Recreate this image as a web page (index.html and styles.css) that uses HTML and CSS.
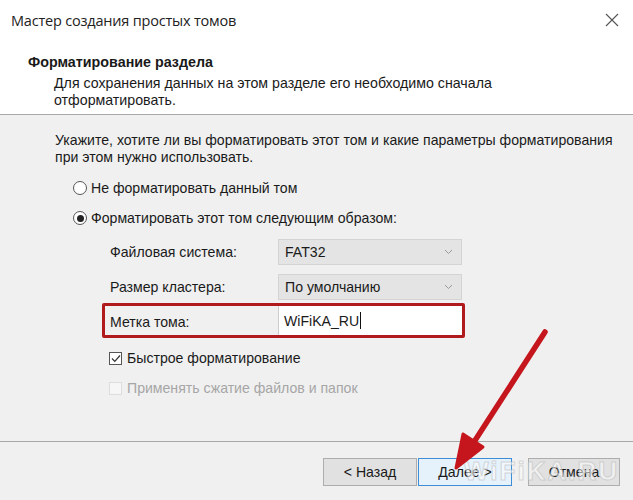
FILE: index.html
```html
<!DOCTYPE html>
<html lang="ru">
<head>
<meta charset="utf-8">
<link rel="stylesheet" href="styles.css">
</head>
<body>
<div class="dialog">
  <header class="head">
    <div class="titlebar">
      <span class="title">Мастер создания простых томов</span>
      <svg class="close" width="14" height="14" viewBox="0 0 14 14"><path d="M1 1L13 13M13 1L1 13" stroke="#555" stroke-width="1.1" fill="none"/></svg>
    </div>
    <div class="heading">Форматирование раздела</div>
    <div class="sub">Для сохранения данных на этом разделе его необходимо сначала<br>отформатировать.</div>
  </header>
  <main class="body">
    <p class="intro">Укажите, хотите ли вы форматировать этот том и какие параметры форматирования<br>при этом нужно использовать.</p>
    <div class="radio-row"><span class="radio"></span>Не форматировать данный том</div>
    <div class="radio-row"><span class="radio on"></span>Форматировать этот том следующим образом:</div>
    <div class="fields">
      <div class="field"><span class="lbl">Файловая система:</span><span class="select">FAT32<svg class="chev" width="9" height="6" viewBox="0 0 9 6"><path d="M1 1L4.5 4.5L8 1" stroke="#999" fill="none"/></svg></span></div>
      <div class="field"><span class="lbl">Размер кластера:</span><span class="select">По умолчанию<svg class="chev" width="9" height="6" viewBox="0 0 9 6"><path d="M1 1L4.5 4.5L8 1" stroke="#999" fill="none"/></svg></span></div>
      <div class="field hl"><span class="lbl">Метка тома:</span><span class="input">WiFiKA_RU<span class="caret"></span></span></div>
    </div>
    <div class="check-row"><span class="check"><svg width="10" height="9" viewBox="0 0 10 9"><path d="M1 4.5L3.8 7.3L9 1.5" stroke="#333" stroke-width="1.2" fill="none"/></svg></span>Быстрое форматирование</div>
    <div class="check-row off"><span class="check dis"></span>Применять сжатие файлов и папок</div>
  </main>
  <footer class="foot">
    <span class="btn">&lt; Назад</span>
    <span class="btn def">Далее &gt;</span>
    <span class="btn last">Отмена</span>
    <span class="mark">WiFiKA.RU</span>
  </footer>
  <svg class="arrow" width="633" height="500" viewBox="0 0 633 500">
    <path d="M545 332 L474 442" stroke="#c4161c" stroke-width="5.5" stroke-linecap="round" fill="none"/>
    <path d="M456 468 L463 434 L483 447 Z" fill="#c4161c" stroke="#c4161c" stroke-width="3" stroke-linejoin="round"/>
  </svg>
</div>
</body>
</html>
```
FILE: styles.css
```css
* { box-sizing: border-box; }
html, body { margin: 0; padding: 0; }
body {
  width: 633px; height: 500px; overflow: hidden;
  font-family: "Liberation Sans", Arial, sans-serif;
  font-size: 14.1px; color: #1a1a1a;
  background: #f0f0f0;
}
.dialog { position: relative; width: 633px; height: 500px; display: flex; flex-direction: column; }
.head { background: #fff; height: 115px; border-bottom: 1px solid #a8a8a8; padding: 0; }
.titlebar { display: flex; justify-content: space-between; align-items: center; height: 40px; padding: 0 14px 0 11px; }
.title { font-family: "Open Sans", sans-serif; font-size: 14.5px; color: #222; letter-spacing: -0.2px; }
.heading { font-weight: bold; font-size: 14.3px; padding-left: 28px; margin-top: 13px; line-height: 18px; }
.sub { padding-left: 54px; font-size: 14.2px; line-height: 17px; margin-top: 4px; }
.body { flex: 1; padding: 17px 0 0 55px; border-bottom: 1px solid #a8a8a8; }
.intro { margin: 0; line-height: 17px; }
.radio-row { display: flex; align-items: center; margin-top: 12px; padding-left: 18px; height: 20px; }
.radio-row + .radio-row { margin-top: 10px; }
.radio { width: 14px; height: 14px; border: 1px solid #555; border-radius: 50%; background: #fff; margin-right: 4px; display: flex; align-items: center; justify-content: center; }
.radio.on::after { content: ""; width: 7px; height: 7px; border-radius: 50%; background: #222; }
.fields { display: flex; flex-direction: column; gap: 9px; margin-top: 11px; margin-left: 47px; width: 363px; }
.field { display: flex; align-items: center; height: 26px; padding-left: 8px; }
.lbl { width: 168px; }
.select { display: flex; align-items: center; justify-content: space-between; width: 184px; height: 26px; background: #e4e4e4; border: 1px solid #d4d4d4; padding: 0 8px 0 6px; }
.field.hl { height: 35px; border: 3px solid #b11a1d; border-radius: 2px; padding-left: 5px; margin-top: -6px; }
.field.hl .lbl { padding-top: 3px; }
.input { display: flex; align-items: center; background: #fff; height: 29px; width: 184px; margin-right: -1px; padding-left: 5px; border-left: 1px solid #ccc; }
.caret { width: 1px; height: 17px; background: #111; margin-left: 1px; }
.check-row { display: flex; align-items: center; margin-top: 10px; padding-left: 54px; height: 20px; }
.check-row + .check-row { margin-top: 10px; }
.check { width: 13px; height: 13px; border: 1px solid #555; background: #fff; margin-right: 5px; display: flex; align-items: center; justify-content: center; }
.check.dis { border-color: #ddd; background: #f6f6f6; }
.check-row.off { color: #a6a6a6; }
.foot { height: 58px; display: flex; align-items: center; justify-content: flex-end; padding-right: 13px; padding-top: 1px; position: relative; }
.btn { width: 94px; height: 28px; display: flex; align-items: center; justify-content: center; background: #e1e1e1; border: 1px solid #adadad; }
.btn.def { border-color: #3c8cd6; background: #e5f1fb; margin-left: 1px; }
.btn.last { width: 92px; margin-left: 16px; }
.mark { position: absolute; right: 14px; top: 14px; font: bold 26px "Liberation Sans", sans-serif; color: rgba(255,255,255,0.55); letter-spacing: 2px; -webkit-text-stroke: 1px rgba(180,180,180,0.5); }
.arrow { position: absolute; left: 0; top: 0; pointer-events: none; }
```
